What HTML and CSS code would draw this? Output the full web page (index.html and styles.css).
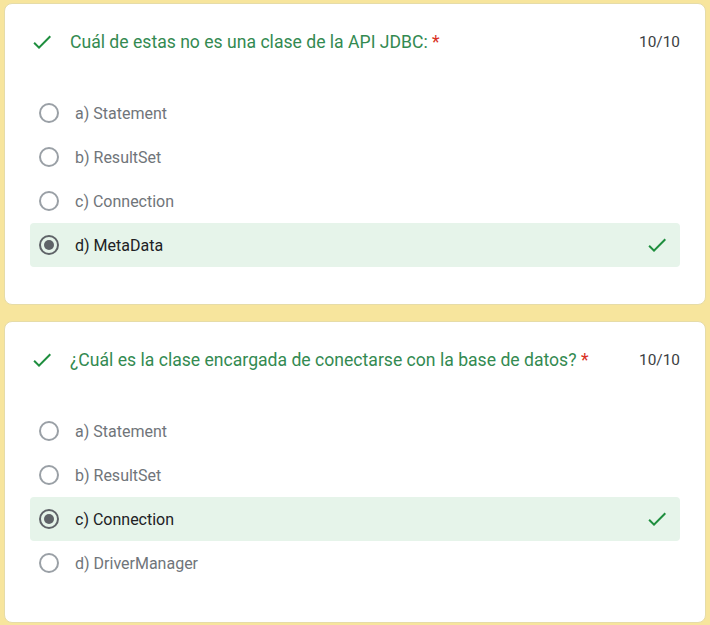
FILE: index.html
```html
<!DOCTYPE html>
<html lang="es">
<head>
<meta charset="utf-8">
<link rel="stylesheet" href="styles.css">
</head>
<body>
<div class="page">
  <section class="card">
    <div class="q-head">
      <svg class="q-check" viewBox="0 0 24 24" width="24" height="24"><path d="M9 16.17L4.83 12l-1.42 1.41L9 19 21 7l-1.41-1.41z"/></svg>
      <div class="q-title">Cuál de estas no es una clase de la API JDBC: <span class="req">*</span></div>
      <div class="q-score">10/10</div>
    </div>
    <div class="options">
      <div class="opt"><span class="radio"></span><span class="label">a) Statement</span></div>
      <div class="opt"><span class="radio"></span><span class="label">b) ResultSet</span></div>
      <div class="opt"><span class="radio"></span><span class="label">c) Connection</span></div>
      <div class="opt correct"><span class="radio on"></span><span class="label">d) MetaData</span>
        <svg class="opt-check" viewBox="0 0 24 24" width="24" height="24"><path d="M9 16.17L4.83 12l-1.42 1.41L9 19 21 7l-1.41-1.41z"/></svg></div>
    </div>
  </section>
  <section class="card">
    <div class="q-head">
      <svg class="q-check" viewBox="0 0 24 24" width="24" height="24"><path d="M9 16.17L4.83 12l-1.42 1.41L9 19 21 7l-1.41-1.41z"/></svg>
      <div class="q-title">¿Cuál es la clase encargada de conectarse con la base de datos? <span class="req">*</span></div>
      <div class="q-score">10/10</div>
    </div>
    <div class="options">
      <div class="opt"><span class="radio"></span><span class="label">a) Statement</span></div>
      <div class="opt"><span class="radio"></span><span class="label">b) ResultSet</span></div>
      <div class="opt correct"><span class="radio on"></span><span class="label">c) Connection</span>
        <svg class="opt-check" viewBox="0 0 24 24" width="24" height="24"><path d="M9 16.17L4.83 12l-1.42 1.41L9 19 21 7l-1.41-1.41z"/></svg></div>
      <div class="opt"><span class="radio"></span><span class="label">d) DriverManager</span></div>
    </div>
  </section>
</div>
</body>
</html>
```

FILE: styles.css
```css
html, body {
  margin: 0;
  padding: 0;
  background: #f7e59d;
}
body {
  font-family: Roboto, "Noto Sans", Arial, sans-serif;
  width: 710px;
  height: 625px;
  overflow: hidden;
}
.page {
  padding: 3px 4px 0 4px;
  display: flex;
  flex-direction: column;
  gap: 16px;
}
.card {
  background: #fff;
  border: 1px solid #e6dca8;
  border-radius: 8px;
  padding: 26px 25px 37px 25px;
}
.q-head {
  display: flex;
  align-items: center;
  height: 24px;
}
.q-check {
  fill: #1e8e3e;
  flex: none;
  margin-right: 16px;
}
.q-title {
  flex: 1;
  font-size: 17.6px;
  color: #338a51;
}
.req {
  color: #d93025;
}
.q-score {
  font-size: 15.4px;
  color: #3c4043;
}
.options {
  margin-top: 37px;
  display: flex;
  flex-direction: column;
}
.opt {
  height: 44px;
  display: flex;
  align-items: center;
  padding: 0 11px 0 9px;
  border-radius: 4px;
}
.opt.correct {
  background: #e6f4ea;
}
.radio {
  width: 16px;
  height: 16px;
  border: 2px solid #9aa0a6;
  border-radius: 50%;
  box-sizing: content-box;
  flex: none;
  margin-right: 16px;
  position: relative;
}
.radio.on {
  border-color: #5f6368;
}
.radio.on::after {
  content: "";
  position: absolute;
  left: 3px;
  top: 3px;
  width: 10px;
  height: 10px;
  border-radius: 50%;
  background: #5f6368;
}
.label {
  flex: 1;
  font-size: 16px;
  color: #70757a;
}
.correct .label {
  color: #202124;
}
.opt-check {
  fill: #1e8e3e;
  flex: none;
}
```
